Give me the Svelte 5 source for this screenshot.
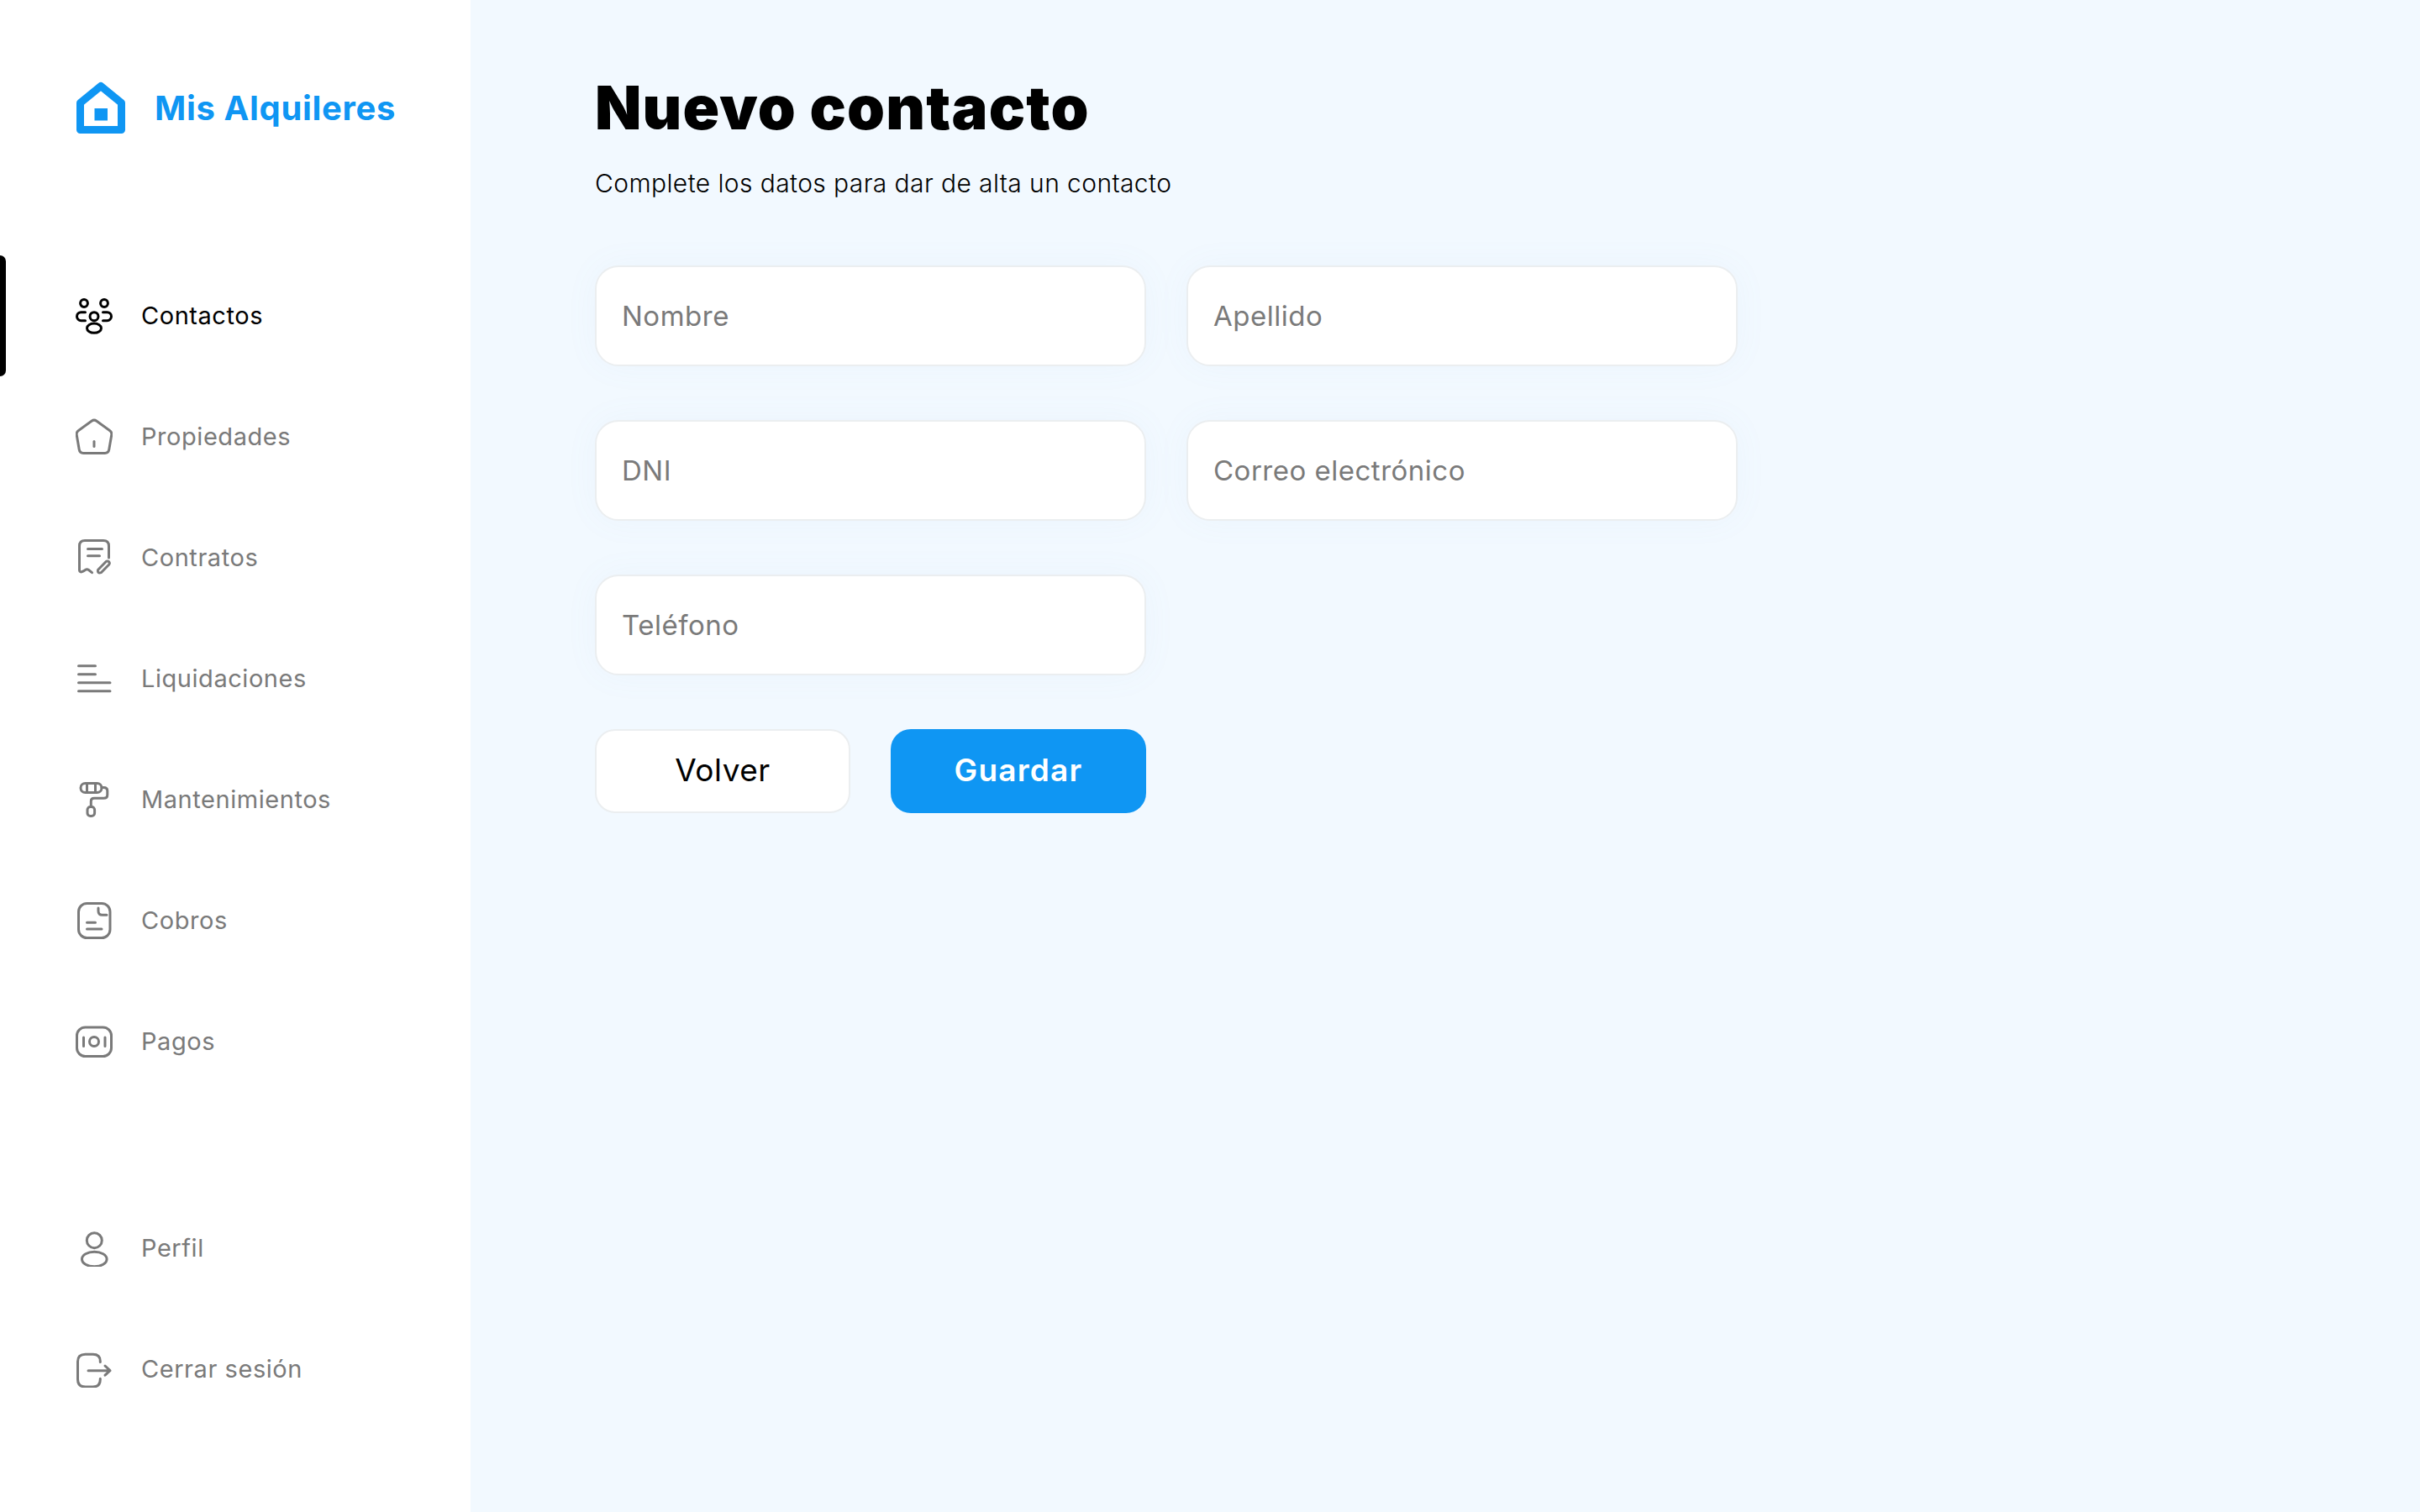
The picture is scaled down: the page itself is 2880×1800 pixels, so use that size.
<script>
	const fields = [
		['Nombre', 'Apellido'],
		['DNI', 'Correo electrónico'],
		['Teléfono']
	];
</script>

<div class="page">
	<aside>
		<div class="brand">
			<svg width="58" height="62" viewBox="0 0 58 62" fill="none">
				<path d="M4.500 25.500 29 5.500l24.500 20v32h-49z" stroke="#0f96f3" stroke-width="9" stroke-linejoin="round" />
				<rect x="21.500" y="32" width="15.500" height="14.500" fill="#0f96f3" />
			</svg>
			<span>Mis Alquileres</span>
		</div>

		<nav>
			<a class="item active" href="#contactos">
				<svg class="icon" viewBox="0 0 44 44">
					<circle cx="10" cy="7" r="4.400" />
					<circle cx="34" cy="7" r="4.400" />
					<circle cx="22" cy="22.700" r="5" />
					<ellipse cx="22" cy="36.700" rx="8.500" ry="5.600" />
					<path d="M11.500 17.700H6.500a5 5 0 0 0 0 10h5M32.500 17.700h5a5 5 0 0 1 0 10h-5" />
				</svg>
				Contactos
			</a>
			<a class="item" href="#propiedades">
				<svg class="icon" viewBox="0 0 44 44">
					<path d="M19 3.200q3-2.200 6 0l15.500 11.300q2.800 2 2.300 5l-3 17.500q-.7 4.400-5 4.400H9.200q-4.300 0-5-4.400l-3-17.500q-.5-3 2.300-5z" />
					<path d="M22 27.500v6" />
				</svg>
				Propiedades
			</a>
			<a class="item" href="#contratos">
				<svg class="icon" viewBox="0 0 44 44">
					<path d="M39.500 22V8q0-6.500-6.500-6.500H11Q4.500 1.500 4.500 8v28.500q0 2.800 2.500 2.300 2.500-.8 4.500-2.300 2-1.300 4 0l4 3.200" />
					<path d="M14.500 11.500h17M14.500 19.700h14" />
					<path d="M26.500 36.500 36 26.700q1.800-1.500 3.600 0 1.500 1.800 0 3.500l-9.300 9.500q-4.500 1.500-3.800-3.200z" />
				</svg>
				Contratos
			</a>
			<a class="item" href="#liquidaciones">
				<svg class="icon" viewBox="0 0 44 44">
					<path d="M3.500 6.700h20M3.500 16.700h20M3.500 26.700h37.500M3.500 36.700h37.500" />
				</svg>
				Liquidaciones
			</a>
			<a class="item" href="#mantenimientos">
				<svg class="icon" viewBox="0 0 44 44">
					<rect x="6" y="2.500" width="25" height="11" rx="5.500" />
					<path d="M13.500 3v10M23.500 3v10" />
					<path d="M31 7.500h2.500q4.300 0 4.300 4v4.800q0 4-4.300 4H22q-3.700 0-3.700 3.500V30.500" />
					<rect x="14" y="30.500" width="8.600" height="11" rx="3.600" />
				</svg>
				Mantenimientos
			</a>
			<a class="item" href="#cobros">
				<svg class="icon" viewBox="0 0 44 44">
					<rect x="3.500" y="1.500" width="37.500" height="41" rx="10" />
					<path d="M27 7v3.500q0 4.800 4.800 4.800H37" />
					<path d="M13.500 24.300h10M13.500 32h17.500" />
				</svg>
				Cobros
			</a>
			<a class="item" href="#pagos">
				<svg class="icon" viewBox="0 0 44 44">
					<rect x="1.500" y="5" width="41" height="34.500" rx="10" />
					<circle cx="22" cy="22" r="5.500" />
					<path d="M9.500 17v10.500M35 17v10.500" />
				</svg>
				Pagos
			</a>
		</nav>

		<div class="bottom">
			<a class="item" href="#perfil">
				<svg class="icon" viewBox="0 0 44 44">
					<circle cx="22.300" cy="12.700" r="9" />
					<ellipse cx="22.300" cy="35" rx="14.800" ry="8.800" />
				</svg>
				Perfil
			</a>
			<a class="item" href="#salir">
				<svg class="icon" viewBox="0 0 44 44">
					<path d="M29.300 13.500v-1q0-8.200-8.700-8.200h-9Q2.500 4.300 2.500 13v21q0 9 9.100 9h9q8.700 0 8.700-8.700v-1" />
					<path d="M15 23.700h26M35 18l6 5.700-6 5.500" />
				</svg>
				Cerrar sesión
			</a>
		</div>
	</aside>

	<main>
		<h1>Nuevo contacto</h1>
		<p class="lead">Complete los datos para dar de alta un contacto</p>

		<form>
			{#each fields as row}
				<div class="row">
					{#each row as name}
						<input type="text" placeholder={name} aria-label={name} />
					{/each}
				</div>
			{/each}
			<div class="actions">
				<button type="button" class="back">Volver</button>
				<button type="button" class="save">Guardar</button>
			</div>
		</form>
	</main>
</div>

<style>
	:global(body) {
		margin: 0;
		background: #f2f9ff;
	}
	.page {
		display: flex;
		min-height: 100vh;
		font-family: Inter, 'Liberation Sans', sans-serif;
	}
	aside {
		width: 560px;
		flex: none;
		box-sizing: border-box;
		height: 100vh;
		background: #fff;
		display: flex;
		flex-direction: column;
	}
	.brand {
		display: flex;
		align-items: center;
		gap: 35px;
		height: 62px;
		margin: 97px 0 145px 91px;
		color: #0f96f3;
		font-size: 40px;
		font-weight: 700;
		letter-spacing: 0.65px;
	}
	nav {
		flex: 1;
	}
	.bottom {
		margin-bottom: 98px;
	}
	.item {
		position: relative;
		display: flex;
		align-items: center;
		gap: 34px;
		box-sizing: border-box;
		height: 144px;
		padding: 0 0 2px 90px;
		color: #7a7a7a;
		font-size: 29px;
		font-weight: 420;
		letter-spacing: 0.55px;
		text-decoration: none;
	}
	.item.active {
		color: #000;
	}
	.item.active::before {
		content: '';
		position: absolute;
		left: 0;
		top: 0;
		bottom: 0;
		width: 7px;
		background: #000;
		border-radius: 0 8px 8px 0;
	}
	.icon {
		width: 44px;
		height: 44px;
		flex: none;
		margin-top: 2px;
		fill: none;
		stroke: currentColor;
		stroke-width: 3;
		stroke-linecap: round;
		stroke-linejoin: round;
	}
	main {
		flex: 1;
		padding: 80px 0 0 148px;
	}
	h1 {
		margin: 0;
		font-size: 72px;
		line-height: 96px;
		font-weight: 900;
		color: #000;
		letter-spacing: 1.2px;
	}
	.lead {
		margin: 21px 0 0;
		font-size: 30px;
		line-height: 42px;
		font-weight: 300;
		color: #000;
		letter-spacing: 0.4px;
	}
	form {
		margin-top: 77px;
		display: flex;
		flex-direction: column;
		gap: 64px;
	}
	.row {
		display: flex;
		gap: 48px;
	}
	input {
		width: 656px;
		height: 120px;
		box-sizing: border-box;
		padding: 0 30px;
		background: #fff;
		border: 2px solid #ebeef0;
		border-radius: 28px;
		box-shadow: 0 0 40px rgba(120, 150, 220, 0.05);
		font: 400 33px Inter, 'Liberation Sans', sans-serif;
		letter-spacing: 0.5px;
		outline: none;
	}
	input::placeholder {
		color: #7a7a7a;
		opacity: 1;
	}
	.actions {
		display: flex;
		gap: 48px;
	}
	button {
		width: 304px;
		height: 100px;
		box-sizing: border-box;
		padding: 0 0 3px;
		border-radius: 24px;
		font-family: Inter, 'Liberation Sans', sans-serif;
		font-size: 37px;
		cursor: pointer;
	}
	.back {
		background: #fff;
		border: 2px solid #ebeef0;
		color: #000;
		font-weight: 400;
		letter-spacing: 0.5px;
	}
	.save {
		background: #0f96f3;
		border: none;
		color: #fff;
		font-weight: 600;
		letter-spacing: 1.2px;
	}
</style>
